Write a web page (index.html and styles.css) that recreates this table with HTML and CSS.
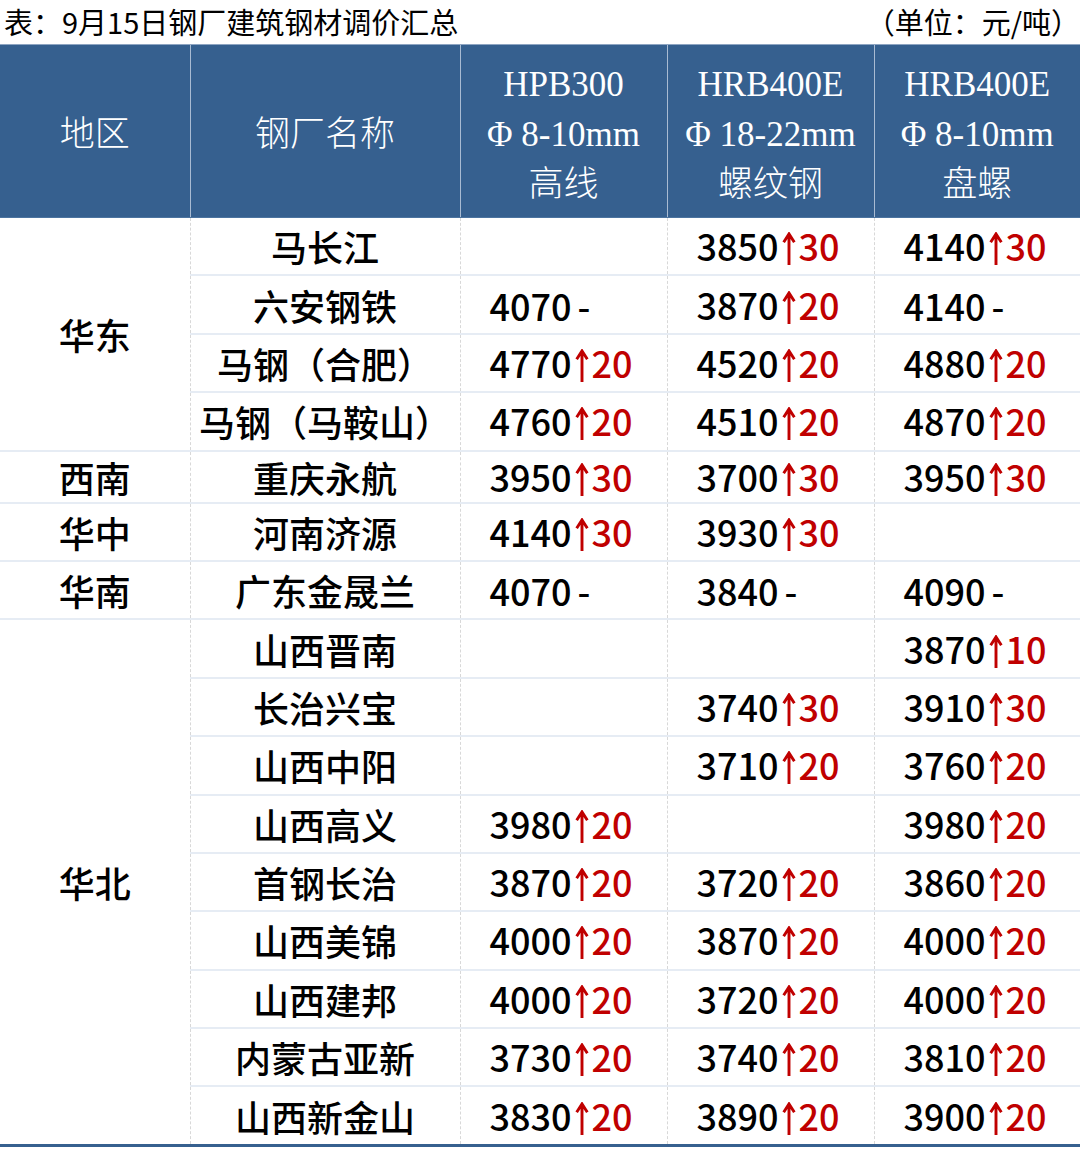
FILE: index.html
```html
<!DOCTYPE html>
<html lang="zh-CN">
<head>
<meta charset="utf-8">
<link rel="stylesheet" href="styles.css">
</head>
<body>
<div class="page">
  <div class="caption">
    <span class="caption-title">表：9月15日钢厂建筑钢材调价汇总</span>
    <span class="caption-unit">（单位：元/吨）</span>
  </div>
  <svg width="0" height="0" class="defs" aria-hidden="true">
    <defs>
      <symbol id="arrow-up" viewBox="0 0 16 34">
        <path d="M8 34V2.5M2.5 10.5L8 2L13.5 10.5" fill="none" stroke="#c00000" stroke-width="3" stroke-linejoin="miter"/>
      </symbol>
    </defs>
  </svg>
  <table class="price-table">
    <colgroup>
      <col class="c-region"><col class="c-name"><col class="c-p1"><col class="c-p2"><col class="c-p3">
    </colgroup>
    <thead>
      <tr>
        <th>地区</th>
        <th>钢厂名称</th>
        <th>HPB300<br>Φ 8-10mm<br>高线</th>
        <th>HRB400E<br>Φ 18-22mm<br>螺纹钢</th>
        <th>HRB400E<br>Φ 8-10mm<br>盘螺</th>
      </tr>
    </thead>
    <tbody>
      <tr>
        <td class="region" rowspan="4">华东</td>
        <td class="name">马长江</td>
        <td class="num"></td>
        <td class="num">3850<svg class="up"><use href="#arrow-up"/></svg><span class="chg">30</span></td>
        <td class="num">4140<svg class="up"><use href="#arrow-up"/></svg><span class="chg">30</span></td>
      </tr>
      <tr>
        <td class="name">六安钢铁</td>
        <td class="num">4070<span class="flat">-</span></td>
        <td class="num">3870<svg class="up"><use href="#arrow-up"/></svg><span class="chg">20</span></td>
        <td class="num">4140<span class="flat">-</span></td>
      </tr>
      <tr>
        <td class="name">马钢（合肥）</td>
        <td class="num">4770<svg class="up"><use href="#arrow-up"/></svg><span class="chg">20</span></td>
        <td class="num">4520<svg class="up"><use href="#arrow-up"/></svg><span class="chg">20</span></td>
        <td class="num">4880<svg class="up"><use href="#arrow-up"/></svg><span class="chg">20</span></td>
      </tr>
      <tr>
        <td class="name">马钢（马鞍山）</td>
        <td class="num">4760<svg class="up"><use href="#arrow-up"/></svg><span class="chg">20</span></td>
        <td class="num">4510<svg class="up"><use href="#arrow-up"/></svg><span class="chg">20</span></td>
        <td class="num">4870<svg class="up"><use href="#arrow-up"/></svg><span class="chg">20</span></td>
      </tr>
      <tr class="short">
        <td class="region">西南</td>
        <td class="name">重庆永航</td>
        <td class="num">3950<svg class="up"><use href="#arrow-up"/></svg><span class="chg">30</span></td>
        <td class="num">3700<svg class="up"><use href="#arrow-up"/></svg><span class="chg">30</span></td>
        <td class="num">3950<svg class="up"><use href="#arrow-up"/></svg><span class="chg">30</span></td>
      </tr>
      <tr>
        <td class="region">华中</td>
        <td class="name">河南济源</td>
        <td class="num">4140<svg class="up"><use href="#arrow-up"/></svg><span class="chg">30</span></td>
        <td class="num">3930<svg class="up"><use href="#arrow-up"/></svg><span class="chg">30</span></td>
        <td class="num"></td>
      </tr>
      <tr>
        <td class="region">华南</td>
        <td class="name">广东金晟兰</td>
        <td class="num">4070<span class="flat">-</span></td>
        <td class="num">3840<span class="flat">-</span></td>
        <td class="num">4090<span class="flat">-</span></td>
      </tr>
      <tr>
        <td class="region region-last" rowspan="9">华北</td>
        <td class="name">山西晋南</td>
        <td class="num"></td>
        <td class="num"></td>
        <td class="num">3870<svg class="up"><use href="#arrow-up"/></svg><span class="chg">10</span></td>
      </tr>
      <tr>
        <td class="name">长治兴宝</td>
        <td class="num"></td>
        <td class="num">3740<svg class="up"><use href="#arrow-up"/></svg><span class="chg">30</span></td>
        <td class="num">3910<svg class="up"><use href="#arrow-up"/></svg><span class="chg">30</span></td>
      </tr>
      <tr>
        <td class="name">山西中阳</td>
        <td class="num"></td>
        <td class="num">3710<svg class="up"><use href="#arrow-up"/></svg><span class="chg">20</span></td>
        <td class="num">3760<svg class="up"><use href="#arrow-up"/></svg><span class="chg">20</span></td>
      </tr>
      <tr>
        <td class="name">山西高义</td>
        <td class="num">3980<svg class="up"><use href="#arrow-up"/></svg><span class="chg">20</span></td>
        <td class="num"></td>
        <td class="num">3980<svg class="up"><use href="#arrow-up"/></svg><span class="chg">20</span></td>
      </tr>
      <tr>
        <td class="name">首钢长治</td>
        <td class="num">3870<svg class="up"><use href="#arrow-up"/></svg><span class="chg">20</span></td>
        <td class="num">3720<svg class="up"><use href="#arrow-up"/></svg><span class="chg">20</span></td>
        <td class="num">3860<svg class="up"><use href="#arrow-up"/></svg><span class="chg">20</span></td>
      </tr>
      <tr>
        <td class="name">山西美锦</td>
        <td class="num">4000<svg class="up"><use href="#arrow-up"/></svg><span class="chg">20</span></td>
        <td class="num">3870<svg class="up"><use href="#arrow-up"/></svg><span class="chg">20</span></td>
        <td class="num">4000<svg class="up"><use href="#arrow-up"/></svg><span class="chg">20</span></td>
      </tr>
      <tr>
        <td class="name">山西建邦</td>
        <td class="num">4000<svg class="up"><use href="#arrow-up"/></svg><span class="chg">20</span></td>
        <td class="num">3720<svg class="up"><use href="#arrow-up"/></svg><span class="chg">20</span></td>
        <td class="num">4000<svg class="up"><use href="#arrow-up"/></svg><span class="chg">20</span></td>
      </tr>
      <tr>
        <td class="name">内蒙古亚新</td>
        <td class="num">3730<svg class="up"><use href="#arrow-up"/></svg><span class="chg">20</span></td>
        <td class="num">3740<svg class="up"><use href="#arrow-up"/></svg><span class="chg">20</span></td>
        <td class="num">3810<svg class="up"><use href="#arrow-up"/></svg><span class="chg">20</span></td>
      </tr>
      <tr class="last">
        <td class="name">山西新金山</td>
        <td class="num">3830<svg class="up"><use href="#arrow-up"/></svg><span class="chg">20</span></td>
        <td class="num">3890<svg class="up"><use href="#arrow-up"/></svg><span class="chg">20</span></td>
        <td class="num">3900<svg class="up"><use href="#arrow-up"/></svg><span class="chg">20</span></td>
      </tr>
    </tbody>
  </table>
</div>
</body>
</html>
```
FILE: styles.css
```css
html, body {
  margin: 0;
  padding: 0;
  background: #ffffff;
}
.page {
  width: 1080px;
  font-family: "Noto Sans CJK SC", "Noto Sans", sans-serif;
  color: #000;
}
.defs {
  position: absolute;
  width: 0;
  height: 0;
}
.caption {
  height: 44px;
  display: flex;
  justify-content: space-between;
  align-items: center;
  padding: 0 0 2px 4px;
  box-sizing: border-box;
  font-size: 29px;
  line-height: 1;
}
.price-table {
  width: 1080px;
  border-collapse: collapse;
  table-layout: fixed;
}
.c-region { width: 190px; }
.c-name { width: 270px; }
.c-p1 { width: 207px; }
.c-p2 { width: 207px; }
.c-p3 { width: 206px; }

.price-table thead th {
  background: #36608f;
  color: #ffffff;
  height: 173px;
  padding: 8px 0 0 0;
  box-sizing: border-box;
  font-family: "Liberation Serif", "Noto Sans CJK SC", serif;
  font-weight: 300;
  font-size: 35px;
  line-height: 50px;
  text-align: center;
  vertical-align: middle;
  border-top: 1px solid #8ea5c2;
  border-left: 1px solid #a9bbd2;
  border-bottom: 1px solid #4c74a0;
}
.price-table thead th:first-child { border-left: none; }

.price-table tbody td {
  height: 56.4px;
  padding: 0;
  font-size: 36px;
  font-weight: 500;
  line-height: 1;
  vertical-align: middle;
  border-top: 2px solid #e6ecf4;
  border-left: 1px dashed #d8d8d8;
}
.price-table tbody tr.short td { height: 50px; }
.price-table tbody tr:first-child td { border-top: none; }
.price-table tbody tr.last td { border-bottom: 3px solid #36608f; }
.price-table tbody td.region {
  text-align: center;
  border-left: none;
  border-bottom: 2px solid #e6ecf4;
}
.price-table tbody td.region-last {
  border-bottom: 3px solid #36608f;
}
.price-table tbody td.name {
  text-align: center;
}
.price-table tbody td.num {
  text-align: left;
  padding-left: 29px;
  white-space: nowrap;
}
.up {
  display: inline-block;
  width: 18px;
  height: 33px;
  margin: 0 1px;
  vertical-align: -4px;
}
.chg { color: #c00000; }
.flat { margin-left: 6px; }
```
